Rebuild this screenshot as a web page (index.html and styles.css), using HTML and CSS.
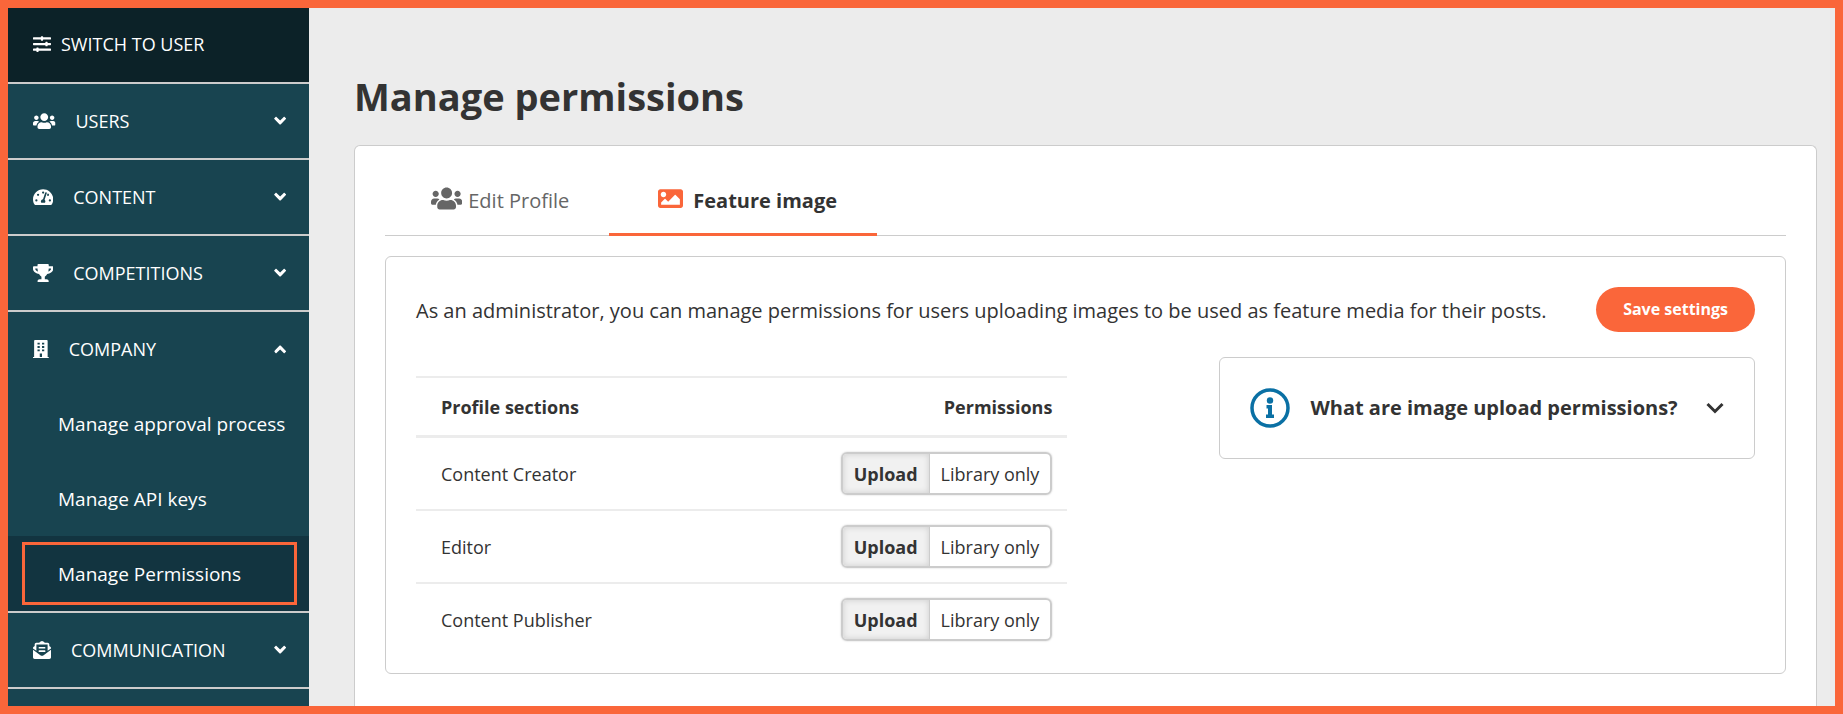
FILE: index.html
```html
<!DOCTYPE html>
<html lang="en">
<head>
    <meta charset="UTF-8">
    <meta name="viewport" content="width=device-width, initial-scale=1.0">
    <title>Manage permissions</title>
    <link rel="stylesheet" href="styles.css">
</head>
<body>
    <!-- Shared icons -->
    <svg class="sprite" aria-hidden="true">
        <symbol id="icon-users" viewBox="0 0 640 512">
            <path d="M96 224c35.3 0 64-28.7 64-64s-28.7-64-64-64-64 28.7-64 64 28.7 64 64 64zm448 0c35.3 0 64-28.7 64-64s-28.7-64-64-64-64 28.7-64 64 28.7 64 64 64zm32 32h-64c-17.6 0-33.5 7.1-45.1 18.6 40.3 22.1 68.9 62 75.1 109.4h66c17.7 0 32-14.3 32-32v-32c0-35.3-28.7-64-64-64zm-256 0c61.9 0 112-50.1 112-112S381.9 32 320 32 208 82.1 208 144s50.1 112 112 112zm76.8 32h-8.3c-20.8 10-43.9 16-68.5 16s-47.6-6-68.5-16h-8.3C179.6 288 128 339.6 128 403.2V432c0 26.5 21.5 48 48 48h288c26.5 0 48-21.5 48-48v-28.8c0-63.6-51.6-115.2-115.2-115.2zm-223.7-13.4C161.5 263.1 145.6 256 128 256H64c-35.3 0-64 28.7-64 64v32c0 17.7 14.3 32 32 32h65.9c6.3-47.4 34.9-87.3 75.2-109.4z"/>
        </symbol>
        <symbol id="icon-chevron" viewBox="0 0 448 512">
            <path d="M207 381.5L12.7 187.1c-9.4-9.4-9.4-24.6 0-33.9l45-45c9.4-9.4 24.5-9.4 33.9 0L224 239l132.4-130.8c9.4-9.4 24.5-9.4 33.9 0l45 45c9.4 9.4 9.4 24.6 0 33.9L241 381.5c-9.4 9.4-24.6 9.4-34 0z"/>
        </symbol>
    </svg>

    <div class="layout">
        <nav class="sidebar">
            <a href="#" class="nav-item switch">
                <svg class="icon" viewBox="0 0 512 512"><path d="M496 384H160v-16c0-9-7-16-16-16h-32c-9 0-16 7-16 16v16H16c-9 0-16 7-16 16v32c0 9 7 16 16 16h80v16c0 9 7 16 16 16h32c9 0 16-7 16-16v-16h336c9 0 16-7 16-16v-32c0-9-7-16-16-16zm0-160h-80v-16c0-9-7-16-16-16h-32c-9 0-16 7-16 16v16H16c-9 0-16 7-16 16v32c0 9 7 16 16 16h336v16c0 9 7 16 16 16h32c9 0 16-7 16-16v-16h80c9 0 16-7 16-16v-32c0-9-7-16-16-16zm0-160H288V48c0-9-7-16-16-16h-32c-9 0-16 7-16 16v16H16C7 64 0 71 0 80v32c0 9 7 16 16 16h208v16c0 9 7 16 16 16h32c9 0 16-7 16-16v-16h208c9 0 16-7 16-16V80c0-9-7-16-16-16z"/></svg>
                <span>SWITCH TO USER</span>
            </a>

            <button type="button" class="nav-item">
                <svg class="icon" viewBox="0 0 640 512"><use href="#icon-users"/></svg>
                <span>USERS</span>
                <svg class="chevron" viewBox="0 0 448 512"><use href="#icon-chevron"/></svg>
            </button>

            <button type="button" class="nav-item">
                <svg class="icon" viewBox="0 0 576 512"><path fill-rule="evenodd" d="M288 32C129 32 0 161 0 320c0 53 14 102 39 145 6 9 16 15 27 15h444c11 0 21-6 27-15 25-43 39-92 39-145C576 161 447 32 288 32zM96 384a32 32 0 1 1 0-64 32 32 0 0 1 0 64zm48-160a32 32 0 1 1 0-64 32 32 0 0 1 0 64zM288 96a32 32 0 1 1 0 64 32 32 0 0 1 0-64zM340 416H236c-8-14-12-23-12-32 0-34 27-62 61-64l61-184c4-12 17-19 30-15 12 4 19 18 15 30l-61 184c14 12 22 30 22 49 0 9-3 18-12 32zm92-192c-16 0-30-12-32-28l12-36a32 32 0 1 1 20 64zm48 160a32 32 0 1 1 0-64 32 32 0 0 1 0 64z"/></svg>
                <span>CONTENT</span>
                <svg class="chevron" viewBox="0 0 448 512"><use href="#icon-chevron"/></svg>
            </button>

            <button type="button" class="nav-item">
                <svg class="icon" viewBox="0 0 576 512"><path d="M552 64H448V24c0-13.3-10.7-24-24-24H152c-13.3 0-24 10.7-24 24v40H24C10.7 64 0 74.7 0 88v56c0 35.7 22.5 72.4 61.9 100.7 31.5 22.7 69.8 37.1 110 41.7C203.3 338.5 240 360 240 360v72h-48c-35.3 0-64 20.7-64 56v12c0 6.6 5.4 12 12 12h296c6.6 0 12-5.4 12-12v-12c0-35.3-28.7-56-64-56h-48v-72s36.7-21.5 68.1-73.6c40.3-4.6 78.6-19 110-41.7 39.3-28.3 61.9-65 61.9-100.7V88c0-13.3-10.7-24-24-24zM99.3 192.8C74.9 175.2 64 155.6 64 144v-16h64.2c1 32.6 5.8 61.2 12.8 86.2-15.1-5.2-29.2-12.4-41.7-21.4zM512 144c0 16.1-17.7 36.1-35.3 48.8-12.5 9-26.7 16.2-41.8 21.4 7-25 11.8-53.6 12.8-86.2H512v16z"/></svg>
                <span>COMPETITIONS</span>
                <svg class="chevron" viewBox="0 0 448 512"><use href="#icon-chevron"/></svg>
            </button>

            <div class="nav-group">
                <button type="button" class="nav-item" aria-expanded="true">
                    <svg class="icon" viewBox="0 0 448 512"><path fill-rule="evenodd" d="M436 480h-20V24c0-13-11-24-24-24H56C43 0 32 11 32 24v456H12c-7 0-12 5-12 12v20h448v-20c0-7-5-12-12-12zM128 76h64v52h-64zm128 0h64v52h-64zM128 172h64v52h-64zm128 0h64v52h-64zM128 268h64v52h-64zm128 0h64v52h-64zM192 384h64v96h-64z"/></svg>
                    <span>COMPANY</span>
                    <svg class="chevron up" viewBox="0 0 448 512"><use href="#icon-chevron"/></svg>
                </button>
                <a href="#" class="sub-item">Manage approval process</a>
                <a href="#" class="sub-item">Manage API keys</a>
                <a href="#" class="sub-item active" aria-current="page">Manage Permissions</a>
            </div>

            <button type="button" class="nav-item">
                <svg class="icon" viewBox="0 0 512 512"><path d="M176 216h160c9 0 16-7 16-16v-16c0-9-7-16-16-16H176c-9 0-16 7-16 16v16c0 9 7 16 16 16zm-16 80c0 9 7 16 16 16h160c9 0 16-7 16-16v-16c0-9-7-16-16-16H176c-9 0-16 7-16 16v16zm96 121c-16 0-33-5-47-15L0 250v214c0 27 21 48 48 48h416c27 0 48-21 48-48V250L303 402c-14 10-31 15-47 15zm237-254c-8-7-17-13-29-23V96c0-27-21-48-48-48h-78l-10-7C312 28 279 0 256 0s-56 28-72 41l-10 7H96c-27 0-48 21-48 48v44c-12 10-21 16-29 23-12 9-19 23-19 38v10l96 69V96h320v184l96-69v-10c0-15-7-29-19-38z"/></svg>
                <span>COMMUNICATION</span>
                <svg class="chevron" viewBox="0 0 448 512"><use href="#icon-chevron"/></svg>
            </button>
        </nav>

        <main class="content">
            <h1>Manage permissions</h1>

            <div class="card">
                <div class="tabs">
                    <a href="#" class="tab">
                        <svg class="tab-icon" viewBox="0 0 640 512"><use href="#icon-users"/></svg>
                        <span>Edit Profile</span>
                    </a>
                    <a href="#" class="tab active">
                        <svg class="tab-icon" viewBox="0 0 512 512"><path d="M464 448H48c-26.5 0-48-21.5-48-48V112c0-26.5 21.5-48 48-48h416c26.5 0 48 21.5 48 48v288c0 26.5-21.5 48-48 48zM112 120c-30.9 0-56 25.1-56 56s25.1 56 56 56 56-25.1 56-56-25.1-56-56-56zM64 384h384V272l-87.5-87.5c-4.7-4.7-12.3-4.7-17 0L208 320l-55.5-55.5c-4.7-4.7-12.3-4.7-17 0L64 336v48z"/></svg>
                        <span>Feature image</span>
                    </a>
                </div>

                <div class="panel">
                    <div class="intro">
                        <p>As an administrator, you can manage permissions for users uploading images to be used as feature media for their posts.</p>
                        <button type="button" class="save-button">Save settings</button>
                    </div>

                    <div class="columns">
                        <table class="permissions">
                            <thead>
                                <tr><th>Profile sections</th><th>Permissions</th></tr>
                            </thead>
                            <tbody>
                                <tr>
                                    <td>Content Creator</td>
                                    <td>
                                        <div class="toggle" role="group" aria-label="Content Creator">
                                            <button type="button" class="on" aria-pressed="true">Upload</button>
                                            <button type="button" aria-pressed="false">Library only</button>
                                        </div>
                                    </td>
                                </tr>
                                <tr>
                                    <td>Editor</td>
                                    <td>
                                        <div class="toggle" role="group" aria-label="Editor">
                                            <button type="button" class="on" aria-pressed="true">Upload</button>
                                            <button type="button" aria-pressed="false">Library only</button>
                                        </div>
                                    </td>
                                </tr>
                                <tr>
                                    <td>Content Publisher</td>
                                    <td>
                                        <div class="toggle" role="group" aria-label="Content Publisher">
                                            <button type="button" class="on" aria-pressed="true">Upload</button>
                                            <button type="button" aria-pressed="false">Library only</button>
                                        </div>
                                    </td>
                                </tr>
                            </tbody>
                        </table>

                        <button type="button" class="info-box" aria-expanded="false">
                            <svg class="info-icon" viewBox="0 0 40 40">
                                <circle cx="20" cy="20" r="18" fill="none" stroke="currentColor" stroke-width="3.5"/>
                                <circle cx="20" cy="12.5" r="3.2"/>
                                <path d="M16.500 17h5.500v9.500h2V30h-8v-3.500h2v-6h-1.500z"/>
                            </svg>
                            <span>What are image upload permissions?</span>
                            <svg class="info-chevron" viewBox="0 0 18 12"><path d="M1.500 2L9 9.500 16.500 2" fill="none" stroke="currentColor" stroke-width="3"/></svg>
                        </button>
                    </div>
                </div>
            </div>
        </main>
    </div>
</body>
</html>
```

FILE: styles.css
```css
* {
    margin: 0;
    padding: 0;
    box-sizing: border-box;
}

body {
    font-family: 'Open Sans', 'Noto Sans', sans-serif;
    font-size: 18px;
    line-height: 24px;
    color: #333;
    background: #ececec;
}

button {
    font: inherit;
    color: inherit;
    background: none;
    border: none;
    cursor: pointer;
}

a {
    color: inherit;
    text-decoration: none;
}

svg {
    fill: currentColor;
    flex: none;
}

.sprite {
    display: none;
}

.layout {
    display: flex;
    min-height: 100vh;
    border: 8px solid #fa663a;
}

/* Sidebar */
.sidebar {
    flex: none;
    width: 301px;
    background: #184450;
    color: #fff;
}

.nav-item {
    display: flex;
    align-items: center;
    gap: 20px;
    width: 100%;
    height: 76px;
    padding: 0 23px 0 25px;
    border-bottom: 2px solid #ccc;
    text-align: left;
}

.switch {
    gap: 10px;
    padding-bottom: 2px;
    background: #0c2228;
}

.icon {
    height: 18px;
}

.chevron {
    height: 14px;
    margin-left: auto;
}

.chevron.up {
    transform: rotate(180deg);
}

.nav-group {
    border-bottom: 2px solid #ccc;
}

.nav-group .nav-item {
    height: 74px;
    border-bottom: none;
}

.sub-item {
    display: flex;
    align-items: center;
    height: 75px;
    padding-left: 50px;
    font-size: 19px;
}

.sub-item.active {
    position: relative;
    background: #123440;
}

/* Highlight frame over the current page link */
.sub-item.active::after {
    content: '';
    position: absolute;
    inset: 6px 12px 6px 14px;
    border: 3px solid #fa663a;
}

/* Main area */
.content {
    flex: 1;
    display: flex;
    flex-direction: column;
    min-width: 0;
    padding: 62px 18px 0 45px;
}

h1 {
    font-size: 38px;
    line-height: 52px;
    font-weight: 700;
    margin-bottom: 23px;
}

.card {
    flex: 1;
    padding: 32px 30px 30px;
    background: #fff;
    border: 1px solid #ccc;
    border-bottom: none;
    border-radius: 6px 6px 0 0;
}

.tabs {
    display: flex;
    height: 58px;
    margin-bottom: 20px;
    border-bottom: 1px solid #ccc;
}

.tab {
    display: flex;
    align-items: flex-start;
    gap: 6px;
    height: 58px;
    padding: 8px 40px 0 46px;
    font-size: 20px;
    line-height: 30px;
    color: #666;
}

.tab.active {
    gap: 10px;
    padding-left: 49px;
    color: #333;
    font-weight: 700;
    border-bottom: 3px solid #fa663a;
}

.tab-icon {
    height: 25px;
}

.tab.active .tab-icon {
    color: #fa663a;
}

.panel {
    padding: 30px 30px 18px;
    border: 1px solid #ccc;
    border-radius: 6px;
}

.intro {
    display: flex;
    align-items: flex-start;
    justify-content: space-between;
    gap: 24px;
    margin-bottom: 25px;
}

.intro p {
    padding-top: 10px;
    font-size: 20px;
    line-height: 28px;
}

.save-button {
    flex: none;
    height: 45px;
    padding: 0 27px 2px;
    border-radius: 23px;
    background: #fa663a;
    color: #fff;
    font-size: 16px;
    font-weight: 700;
}

.columns {
    display: flex;
    align-items: flex-start;
    justify-content: space-between;
}

.permissions {
    width: calc(60% - 152px);
    margin-top: 19px;
    border-spacing: 0;
    border-top: 2px solid #ececec;
}

.permissions th,
.permissions td {
    height: 73px;
    padding: 0 15px 0 25px;
    border-bottom: 2px solid #ececec;
    text-align: left;
    vertical-align: middle;
}

.permissions th {
    height: 60px;
    border-bottom-width: 3px;
    font-weight: 700;
}

.permissions th:last-child,
.permissions td:last-child {
    text-align: right;
}

.permissions tbody tr:last-child td {
    height: 71px;
    border-bottom: none;
}

.toggle {
    display: inline-flex;
    vertical-align: middle;
    overflow: hidden;
    border: 2px solid #ccc;
    border-radius: 6px;
    box-shadow: 0 0 2px rgba(0, 0, 0, 0.2);
}

.toggle button {
    height: 39px;
    padding: 0 11px;
}

.toggle .on {
    background: #f1f1f1;
    border-right: 1px solid #ccc;
    box-shadow: inset 0 0 6px rgba(0, 0, 0, 0.15);
    font-weight: 700;
}

.info-box {
    display: flex;
    align-items: center;
    width: 40%;
    height: 102px;
    padding: 0 30px;
    border: 1px solid #ccc;
    border-radius: 6px;
    font-size: 20px;
    font-weight: 700;
}

.info-icon {
    width: 40px;
    margin-right: 20px;
    color: #0a70a4;
}

.info-chevron {
    width: 18px;
    margin-left: auto;
}
```
